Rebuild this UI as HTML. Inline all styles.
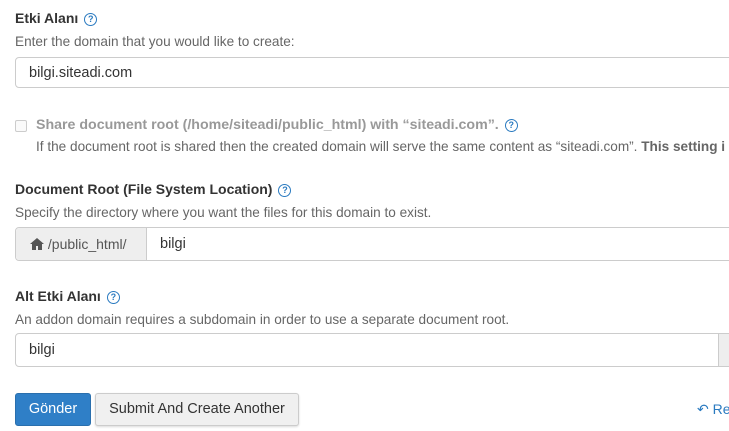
<!DOCTYPE html><html><head><style>
body{margin:0;width:729px;height:431px;overflow:hidden;background:#fff;font-family:"Liberation Sans",sans-serif;color:#333;position:relative}
.a{position:absolute;white-space:nowrap}
.l{font-weight:bold;font-size:14px;color:#333}
.d{font-size:13.6px;color:#666}
.q{display:inline-block;width:11px;height:11px;border:1.3px solid #2a7ac0;border-radius:50%;color:#2a7ac0;font-size:9px;font-weight:bold;text-align:center;line-height:11px;vertical-align:1px;margin-left:6px}
.in{position:absolute;border:1px solid #ccc;border-radius:4px;height:31px;box-sizing:border-box;font-size:14.5px;line-height:31px;color:#333}
</style></head><body>
<div class="a l" style="left:15px;top:10px">Etki Alanı<span class="q">?</span></div>
<div class="a d" style="left:15px;top:34px">Enter the domain that you would like to create:</div>
<div class="in" style="left:15px;top:57px;width:730px;padding-left:13px;line-height:31px">bilgi.siteadi.com</div>
<div class="a" style="left:15px;top:120px;width:12px;height:12px;border:1px solid #ccc;border-radius:2px;box-sizing:border-box;background:#fafafa"></div>
<div class="a" style="left:36px;top:117px;font-size:14.2px;font-weight:bold;color:#999">Share document root (/home/siteadi/public_html) with “siteadi.com”.<span class="q">?</span></div>
<div class="a d" style="left:36px;top:139px">If the document root is shared then the created domain will serve the same content as “siteadi.com”. <b>This setting i</b></div>
<div class="a l" style="left:15px;top:181px">Document Root (File System Location)<span class="q">?</span></div>
<div class="a d" style="left:15px;top:205px">Specify the directory where you want the files for this domain to exist.</div>
<div class="in" style="left:15px;top:227px;width:730px;height:34px"></div>
<div class="a" style="left:16px;top:228px;width:130px;height:32px;background:#eee;border-right:1px solid #ccc;border-radius:4px 0 0 4px;font-size:14px;line-height:32px;color:#555"><svg style="margin-left:14px;vertical-align:-1px" width="14" height="12" viewBox="0 0 14 12"><path d="M7 0L0 6h2v6h4V8h2v4h4V6h2z" fill="#555"/></svg> /public_html/</div>
<div class="a" style="left:160px;top:228px;font-size:14.5px;line-height:32px">bilgi</div>
<div class="a l" style="left:15px;top:288px">Alt Etki Alanı<span class="q">?</span></div>
<div class="a d" style="left:15px;top:312px">An addon domain requires a subdomain in order to use a separate document root.</div>
<div class="in" style="left:15px;top:333px;width:730px;height:34px;padding-left:13px;line-height:32px">bilgi</div>
<div class="a" style="left:718px;top:334px;width:20px;height:32px;background:#eee;border-left:1px solid #ccc"></div>
<div class="a" style="left:15px;top:393px;width:76px;height:33px;background:#2f7fc7;border:1px solid #2a6fad;box-sizing:border-box;border-radius:3px;color:#fff;font-size:14.5px;text-align:center;line-height:31px">Gönder</div>
<div class="a" style="left:95px;top:393px;width:204px;height:33px;background:#f0f0f0;border:1px solid #ccc;box-sizing:border-box;border-radius:3px;color:#333;font-size:14.5px;text-align:center;line-height:31px;box-shadow:0 1px 2px rgba(0,0,0,.15)">Submit And Create Another</div>
<div class="a" style="left:697px;top:401px;font-size:14px;color:#2a7ac0">&#8630; Re</div>
</body></html>
